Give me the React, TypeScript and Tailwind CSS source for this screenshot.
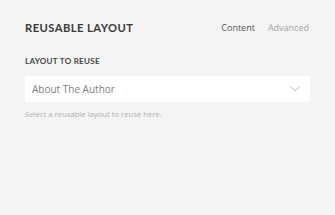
import React from 'react';

const App: React.FC = () => {
  return (
    <div className="w-[335px] h-[215px] bg-[#f4f4f4] px-[25px] pt-[21px]" style={{ fontFamily: '"Open Sans", sans-serif' }}>
      {/* Header */}
      <div className="flex items-center justify-between h-[14px]">
        <h1 className="text-[11.2px] leading-[14px] font-bold tracking-[0.45px] text-[#3a3a3a]" style={{ fontFamily: '"Lato", sans-serif' }}>
          REUSABLE LAYOUT
        </h1>
        <div className="flex items-center gap-[13px] text-[9px] leading-[14px] pr-[1px]">
          <span className="text-[#555]">Content</span>
          <span className="text-[#a6a6a6]">Advanced</span>
        </div>
      </div>

      {/* Field */}
      <div className="mt-[20px]">
        <label className="block text-[8px] leading-[12px] font-bold tracking-[0.3px] text-[#444]" style={{ fontFamily: '"Lato", sans-serif' }}>
          LAYOUT TO REUSE
        </label>
        <div className="mt-[9px] h-[26px] bg-white flex items-center justify-between pl-[7px] pr-[10px]">
          <span className="text-[10px] text-[#808080]">About The Author</span>
          <svg width="10" height="6" viewBox="0 0 10 6" fill="none" stroke="#b5b5b5" strokeWidth="1">
            <path d="M0.5 0.5 L5 5 L9.5 0.5" />
          </svg>
        </div>
        <p className="mt-[6px] text-[7.7px] leading-[12px] text-[#b0b0b0]">Select a reusable layout to reuse here.</p>
      </div>
    </div>
  );
};

export default App;
